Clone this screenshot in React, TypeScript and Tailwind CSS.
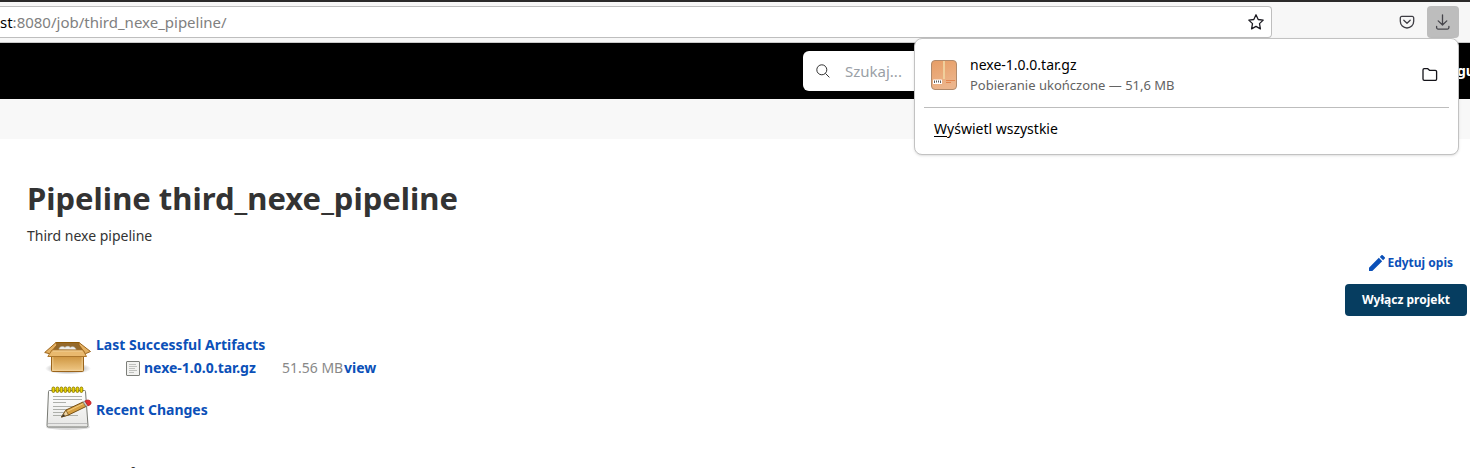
import React from "react";

function StarIcon() {
  return (
    <svg width="16" height="16" viewBox="0 0 16 16" fill="none" stroke="#1c1b22" strokeWidth="1.3" strokeLinejoin="round">
      <path d="M8 .8l2.200 4.700 5 .6-3.700 3.500.9 5.300L8 12.400l-4.400 2.500.9-5.300L.8 6.100l5-.6z" />
    </svg>
  );
}

function PocketIcon() {
  return (
    <svg width="16" height="16" viewBox="0 0 16 16" fill="none" stroke="#3f3e45" strokeWidth="1.3" strokeLinecap="round" strokeLinejoin="round">
      <path d="M2.800 2.400h10.400a1.500 1.500 0 0 1 1.500 1.500v3.400a6.700 6.700 0 0 1-13.400 0V3.900a1.500 1.500 0 0 1 1.500-1.500z" />
      <path d="M4.800 6.200L8 9.200l3.200-3" />
    </svg>
  );
}

function DownloadIcon() {
  return (
    <svg width="16" height="16" viewBox="0 0 16 16" fill="none" stroke="#46454b" strokeWidth="1.3" strokeLinecap="round" strokeLinejoin="round">
      <path d="M7.500 .8v10M3.200 6.900l4.300 4.100 4.300-4.100M1.600 12.400v1.200a1.500 1.500 0 0 0 1.500 1.500h9.300a1.500 1.500 0 0 0 1.500-1.500v-1.200" />
    </svg>
  );
}

function FolderIcon() {
  return (
    <svg width="16" height="16" viewBox="0 0 16 16" fill="none" stroke="#15141a" strokeWidth="1.3" strokeLinejoin="round">
      <path d="M2.200 1.700h3.600l1.700 1.600h5.800a1.300 1.300 0 0 1 1.300 1.300v7.400a1.300 1.300 0 0 1-1.300 1.300H2.300A1.300 1.300 0 0 1 1 12V3a1.300 1.300 0 0 1 1.200-1.300z" />
    </svg>
  );
}

function SearchIcon() {
  return (
    <svg className="shrink-0" width="14" height="14" viewBox="0 0 14 14" fill="none" stroke="#333" strokeWidth="1">
      <circle cx="5.800" cy="5.800" r="5" />
      <path d="M9.400 9.400l4 4" />
    </svg>
  );
}

function ArchiveIcon() {
  return (
    <svg width="26" height="30" viewBox="0 0 26 30">
      <defs>
        <linearGradient id="archive" x1="0" y1="0" x2="0.300" y2="1">
          <stop offset="0" stopColor="#e79d65" />
          <stop offset="1" stopColor="#ecb58c" />
        </linearGradient>
      </defs>
      <rect x=".5" y=".5" width="25" height="29" rx="3.500" fill="url(#archive)" stroke="#b08a6c" />
      <path d="M12 1h2v18h-2z" fill="#f0cf9c" />
      <rect x="2" y="19.500" width="9" height="4.500" rx=".5" fill="#fff" />
      <path d="M3.500 20.500v2.500M5.500 20.500v2M7.500 20.500v2M9.500 20.500v2.500" stroke="#333" strokeWidth=".8" />
      <path d="M15 20.500h9M15 22.500h5" stroke="#df7b43" strokeWidth=".8" />
    </svg>
  );
}

function PencilIcon() {
  return (
    <svg width="16" height="16" viewBox="3 3 18 18" fill="#0b50b8">
      <path d="M3 17.250V21h3.750L17.810 9.940l-3.750-3.750L3 17.250zM20.710 7.040a1 1 0 0 0 0-1.410l-2.340-2.340a1 1 0 0 0-1.410 0l-1.830 1.830 3.750 3.750 1.830-1.830z" />
    </svg>
  );
}

function PackageIcon() {
  return (
    <svg width="48" height="48" viewBox="0 0 48 48">
      <defs>
        <linearGradient id="box" x1="0" y1="0" x2="0" y2="1">
          <stop offset="0" stopColor="#c98d35" />
          <stop offset="1" stopColor="#f0c987" />
        </linearGradient>
        <radialGradient id="boxShadow">
          <stop offset="0.500" stopColor="#777" stopOpacity=".6" />
          <stop offset="1" stopColor="#777" stopOpacity="0" />
        </radialGradient>
      </defs>
      <ellipse cx="24" cy="36.500" rx="23" ry="6" fill="url(#boxShadow)" />
      <path d="M12 10.500h23l5 11H7.500z" fill="#94692b" stroke="#8f5902" />
      <path d="M15 17.500c0-3 4-4 6-2 2-2 5-1 5 0 3-2 6 0 6 2.500z" fill="#eeeeec" stroke="#babdb6" strokeWidth=".6" />
      <path d="M7.500 22h32v16.500a1 1 0 0 1-1 1h-30a1 1 0 0 1-1-1z" fill="url(#box)" stroke="#9b641b" />
      <path d="M8.800 24h29.400v14.300H8.800z" fill="none" stroke="#f3d8a5" strokeWidth=".7" />
      <path d="M12 10.500L.700 20.500l4.800 1.200L13 13zM35 10.500l11.500 9-5 2.200L35 13z" fill="#e4b163" stroke="#9b641b" strokeLinejoin="round" />
      <path d="M8 18h31l3.500 6.500H3.800z" fill="#e9b96e" stroke="#ad772c" strokeLinejoin="round" />
      <path d="M8.800 19h29.500" stroke="#f7dda9" strokeWidth=".7" />
    </svg>
  );
}

function NotepadIcon() {
  return (
    <svg width="48" height="48" viewBox="0 0 48 48">
      <defs>
        <linearGradient id="paper" x1="0" y1="0" x2="0" y2="1">
          <stop offset="0" stopColor="#fff" />
          <stop offset="1" stopColor="#e6e6e4" />
        </linearGradient>
      </defs>
      <ellipse cx="24" cy="42" rx="22" ry="3" fill="#555" opacity=".22" />
      <path d="M5.500 5.500h35a1 1 0 0 1 1 1L44 40.500a1.500 1.500 0 0 1-1.500 1.500h-38A1.500 1.500 0 0 1 3 40.500L4.500 6.500a1 1 0 0 1 1-1z" fill="url(#paper)" stroke="#777973" />
      <path d="M3.500 38.500h40" stroke="#aaa" strokeWidth=".7" />
      <path d="M9 11.500h29M9 14.500h29M9 17.500h13M9 21.500h25M9 24.500h27M9 27.500h20M9 30.500h25" stroke="#a5a7a2" strokeWidth=".9" />
      {[9, 13, 17, 21, 25, 29, 33, 37].map((x) => (
        <rect key={x} x={x - 1} y="2" width="2.800" height="5.500" rx="1.400" fill="#edd400" stroke="#8a7a00" strokeWidth=".9" />
      ))}
      <path d="M17.500 32L22 25l17-8 3 4.500-17.500 8.500z" fill="#d7a043" stroke="#765017" strokeLinejoin="round" />
      <path d="M23 26.500l16.500-8" stroke="#f4cf83" />
      <path d="M17.500 32L22 25l2.500 5z" fill="#eed4a3" stroke="#765017" strokeWidth=".8" />
      <path d="M17 32.500l3-3.500.8 2z" fill="#333" />
      <path d="M39 17l2-1 3 4.500-2 1z" fill="#c9cbc6" stroke="#777" strokeWidth=".6" />
      <path d="M41 16c3-2 6-.5 6 2 0 1.500-1 2-3 2.800z" fill="#e32d31" stroke="#b42022" strokeWidth=".8" />
    </svg>
  );
}

function DocumentIcon() {
  return (
    <svg width="14" height="16" viewBox="0 0 14 16" fill="none">
      <rect x=".5" y="1.500" width="13" height="14" rx=".5" fill="#f2f2f0" stroke="#7d7f7a" />
      <path d="M3 4.500h7M3 6.500h8M3 8.500h6M3 10.500h8M3 12.500h5" stroke="#bfc0bd" />
    </svg>
  );
}

function BrowserToolbar() {
  return (
    <div className="flex h-[43px] items-start border-t-2 border-b border-t-[#2b2a2a] border-b-[#c9c9c9] bg-[#f7f7f7] pt-1 pr-[11px]">
      <div className="flex h-8 flex-1 items-center rounded-r border border-l-0 border-[#bebebe] bg-white pr-[7px]">
        <div className="flex-1 text-[15px] leading-5 text-[#808080]">
          <span className="text-black">st</span>:8080/job/third_nexe_pipeline/
        </div>
        <button aria-label="Bookmark"><StarIcon /></button>
      </div>
      <div className="flex w-[187px] shrink-0 items-center justify-end gap-3">
        <button aria-label="Pocket"><PocketIcon /></button>
        <button aria-label="Downloads" className="flex size-8 items-center justify-center rounded bg-[#bdbdbd]">
          <DownloadIcon />
        </button>
      </div>
    </div>
  );
}

function DownloadsPanel() {
  return (
    <section className="absolute top-[38px] right-[11px] w-[545px] rounded-lg border border-[#c2c2c2] bg-white px-[9px] pb-3 text-black shadow">
      <div className="flex h-[69px] items-center gap-[13px] border-b border-[#bdbdbd] pt-1 pr-[11px] pl-[7px]">
        <ArchiveIcon />
        <div className="flex-1">
          <div className="text-[14px] leading-5">nexe-1.0.0.tar.gz</div>
          <div className="text-[13px] leading-5 text-[#636363]">Pobieranie ukończone — 51,6 MB</div>
        </div>
        <button aria-label="Open folder"><FolderIcon /></button>
      </div>
      <button className="flex h-[34px] items-center px-[10px] pt-[7px] text-[14px] leading-5">
        <span className="underline underline-offset-2">W</span>yświetl wszystkie
      </button>
    </section>
  );
}

export default function App() {
  return (
    <div className="relative h-screen overflow-hidden bg-white font-['Noto_Sans','Open_Sans',sans-serif] text-[14px] leading-5 text-[#333]">
      <BrowserToolbar />
      <header className="flex h-14 items-center justify-end bg-black">
        <label className="flex h-10 w-[240px] items-center gap-[15px] rounded-md bg-white pl-[13px]">
          <SearchIcon />
          <input type="text" aria-label="Szukaj" placeholder="Szukaj..." className="min-w-0 flex-1 text-[15px] outline-none placeholder:text-[#9a9fa6]" />
        </label>
        <a href="#login" className="ml-[414px] w-[13px] overflow-hidden text-[14px] font-bold text-white">gu</a>
      </header>
      <div className="h-10 bg-[#f8f8f8]" />
      <main className="pt-[39px] pl-[27px]">
        <h1 className="text-[31px] leading-10 font-bold">Pipeline third_nexe_pipeline</h1>
        <p className="mt-2">Third nexe pipeline</p>
        <div className="mt-[5px] flex flex-col items-end gap-[9px] pr-[3px] text-[12px] font-bold">
          <a href="#edit" className="flex h-6 items-center gap-[2px] pr-[14px] text-[#0b50b8]">
            <PencilIcon />
            Edytuj opis
          </a>
          <button className="flex h-8 w-[122px] items-center justify-center rounded bg-[#063d60] text-white">
            Wyłącz projekt
          </button>
        </div>
        <table className="mt-4 ml-[17px] border-collapse font-bold text-[#0b50b8]">
          <tbody>
            <tr>
              <td className="pr-1 align-top"><PackageIcon /></td>
              <td className="align-top">
                <a href="#artifacts" className="mt-[3px] block">Last Successful Artifacts</a>
                <div className="mt-[3px] flex items-center pl-[30px]">
                  <DocumentIcon />
                  <a href="#file" className="ml-1 w-[138px]">nexe-1.0.0.tar.gz</a>
                  <span className="w-[62px] font-normal text-[#888]">51.56 MB</span>
                  <a href="#view">view</a>
                </div>
              </td>
            </tr>
            <tr>
              <td className="pt-[5px] pr-1"><NotepadIcon /></td>
              <td className="pt-[7px]"><a href="#changes">Recent Changes</a></td>
            </tr>
          </tbody>
        </table>
        <h2 className="mt-[27px] ml-[17px] text-[23px] leading-8 font-bold">Stage View</h2>
      </main>
      <DownloadsPanel />
    </div>
  );
}
